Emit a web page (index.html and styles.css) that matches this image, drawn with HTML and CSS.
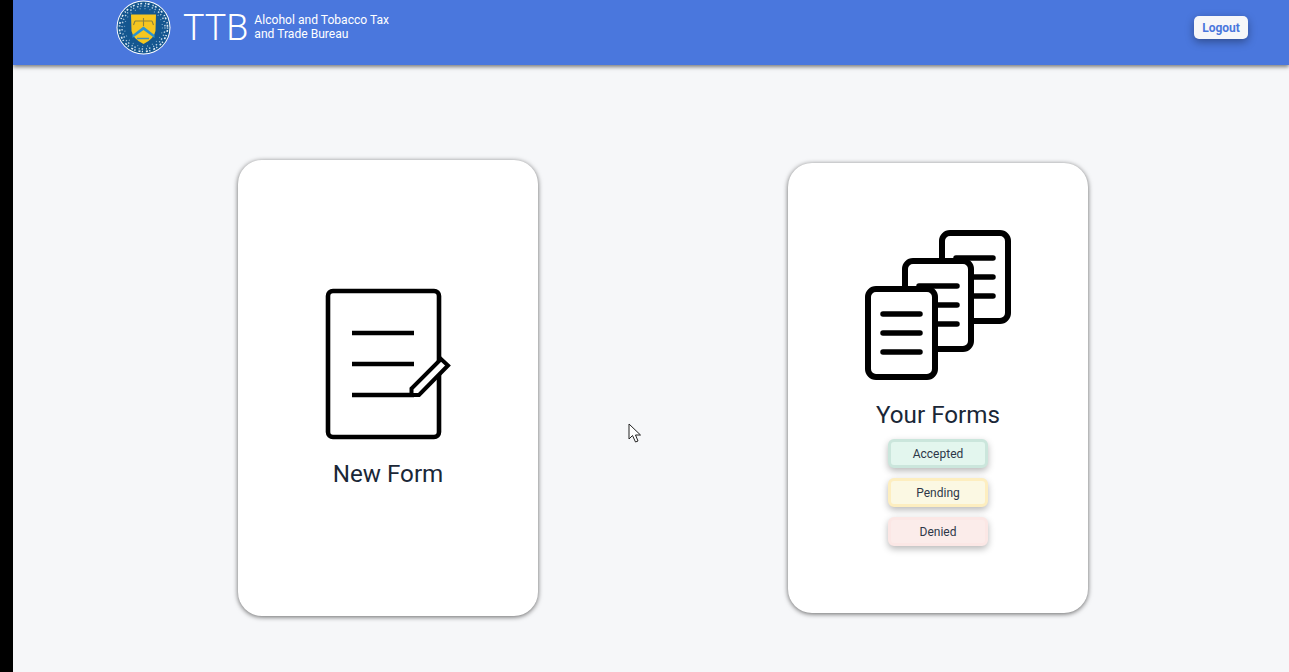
FILE: index.html
```html
<!DOCTYPE html>
<html lang="en">
<head>
<meta charset="utf-8">
<title>TTB</title>
<link rel="stylesheet" href="styles.css">
</head>
<body>
<div class="strip"></div>
<div class="main">
  <header class="bar">
    <div class="brand">
      <svg class="seal" width="55" height="55" viewBox="0 0 55 55" aria-hidden="true">
        <circle cx="27.5" cy="27.5" r="27" fill="#fff"/>
        <circle cx="27.5" cy="27.5" r="26" fill="#14568f"/>
        <circle cx="27.5" cy="27.5" r="24" fill="none" stroke="#dfeaf3" stroke-width="1.6" stroke-dasharray="1.2 1.4 2 3"/>
        <circle cx="27.5" cy="27.5" r="21.5" fill="none" stroke="#b9d0e3" stroke-width="1.5" stroke-dasharray="1 3 1.5 2"/>
        <circle cx="27.5" cy="27.5" r="19" fill="none" stroke="#7fa8ca" stroke-width="1.2" stroke-dasharray="1 4"/>
        <path d="M15 14.5 H40 L39.5 31 Q38 39 27.5 44 Q17 39 15.5 31 Z" fill="#f6c61f"/>
        <path d="M16.5 35 L27.5 26.5 L38.5 35 L38.5 38 L27.5 30 L16.5 38 Z" fill="#2b93d0"/>
        <path d="M19 21 H36 M27.5 18 V26 M19 21 L17.5 25 M36 21 L37.5 25" stroke="#8a8440" stroke-width="1.1" fill="none"/>
        <path d="M21 38.5 L33 38.5" stroke="#3a8fc2" stroke-width="1.5"/>
      </svg>
      <span class="acronym">TTB</span>
      <span class="agency">Alcohol and Tobacco Tax<br>and Trade Bureau</span>
    </div>
    <button class="logout">Logout</button>
  </header>
  <main class="content">
    <section class="card card-new">
      <svg class="icon" width="128" height="152" viewBox="324 288 128 152" aria-hidden="true">
        <rect x="328" y="291" width="111" height="146" rx="5" fill="#fff" stroke="#000" stroke-width="4.6"/>
        <path d="M352 333H414M352 364H414M352 395H414" stroke="#000" stroke-width="4.6" fill="none"/>
        <path d="M411.5 395V388.5L441 359L448 365.5L419 395Z" fill="#fff" stroke="#000" stroke-width="4" stroke-linejoin="miter" stroke-miterlimit="4"/>
      </svg>
      <h2 class="title title-new">New Form</h2>
    </section>
    <section class="card card-list">
      <svg class="icon" width="156" height="158" viewBox="860 226 156 158" aria-hidden="true">
        <rect x="942" y="233" width="66" height="88" rx="8" fill="#fff" stroke="#000" stroke-width="6"/>
        <path d="M956 258H993M956 277H993M956 296H993" stroke="#000" stroke-width="5.5" stroke-linecap="round"/>
        <rect x="905" y="261" width="66" height="88" rx="8" fill="#fff" stroke="#000" stroke-width="6"/>
        <path d="M919 286H957M919 305H957M919 324H957" stroke="#000" stroke-width="5.5" stroke-linecap="round"/>
        <rect x="868" y="289" width="67" height="88" rx="8" fill="#fff" stroke="#000" stroke-width="6"/>
        <path d="M883 314H920M883 333H920M883 352H920" stroke="#000" stroke-width="5.5" stroke-linecap="round"/>
      </svg>
      <h2 class="title title-list">Your Forms</h2>
      <div class="chips">
        <div class="chip chip-ok">Accepted</div>
        <div class="chip chip-wait">Pending</div>
        <div class="chip chip-no">Denied</div>
      </div>
    </section>
  </main>
</div>
<svg class="pointer" width="14" height="21" viewBox="0 0 14 21" aria-hidden="true">
  <path d="M1 1V16L4.5 12.5L7.5 19L10 18L7.5 12H12.5Z" fill="#fff" stroke="#222" stroke-width="1"/>
</svg>
</body>
</html>
```
FILE: styles.css
```css
* { box-sizing: border-box; }
html, body { height: 100%; }
body {
  margin: 0;
  display: flex;
  overflow: hidden;
  background: #000;
  font-family: Roboto, "Liberation Sans", sans-serif;
  color: #1a2737;
}
.strip { width: 13px; flex: none; background: #000; }
.main { flex: 1; background: #f6f7f9; min-width: 0; }
.bar {
  height: 65px;
  background: #4a77dd;
  box-shadow: 0 2px 4px rgba(0,0,0,.5);
  display: flex;
  align-items: center;
  justify-content: space-between;
  padding: 0 41px 10px 103px;
}
.brand { display: flex; align-items: center; }
.seal { display: block; }
.acronym {
  color: #fff;
  font-size: 36px;
  font-weight: 300;
  margin-left: 12px;
  line-height: 42px;
}
.agency {
  color: #fff;
  font-size: 12.1px;
  line-height: 14px;
  margin-left: 6px;
  margin-top: -1px;
}
.logout {
  width: 54px;
  height: 23px;
  border: 0;
  border-radius: 5px;
  background: #f6f7f9;
  color: #4a77dd;
  font: 700 12px Roboto, sans-serif;
  padding: 0;
  box-shadow: 0 3px 8px rgba(0,0,0,.35);
}
.content {
  display: flex;
  align-items: center;
  gap: 250px;
  padding: 95px 0 0 225px;
}
.card {
  width: 300px;
  background: #fff;
  border-radius: 24px;
  box-shadow: 0 1px 5px rgba(0,0,0,.6);
  display: flex;
  flex-direction: column;
  align-items: center;
}
.card-new { height: 456px; padding-top: 128px; }
.card-list { height: 450px; padding-top: 63px; }
.icon { display: block; flex: none; }
.title { margin: 0; font-size: 24.2px; font-weight: 400; line-height: 28px; }
.title-new { margin-top: 20px; }
.title-list { margin-top: 17px; }
.chips { display: flex; flex-direction: column; gap: 10px; margin-top: 10px; }
.chip {
  width: 100px;
  height: 29px;
  border-radius: 6px;
  border: 3px solid;
  color: #2d3748;
  font-size: 12px;
  line-height: 24px;
  text-align: center;
  box-shadow: 0 3px 7px rgba(0,0,0,.28);
}
.chip-ok { background: #e3f6ee; border-color: #cbe6dc; }
.chip-wait { background: #fbf8e3; border-color: #fdeec0; }
.chip-no { background: #fbecea; border-color: #fbe7e5; }
.pointer { position: absolute; left: 628px; top: 423px; }
```
